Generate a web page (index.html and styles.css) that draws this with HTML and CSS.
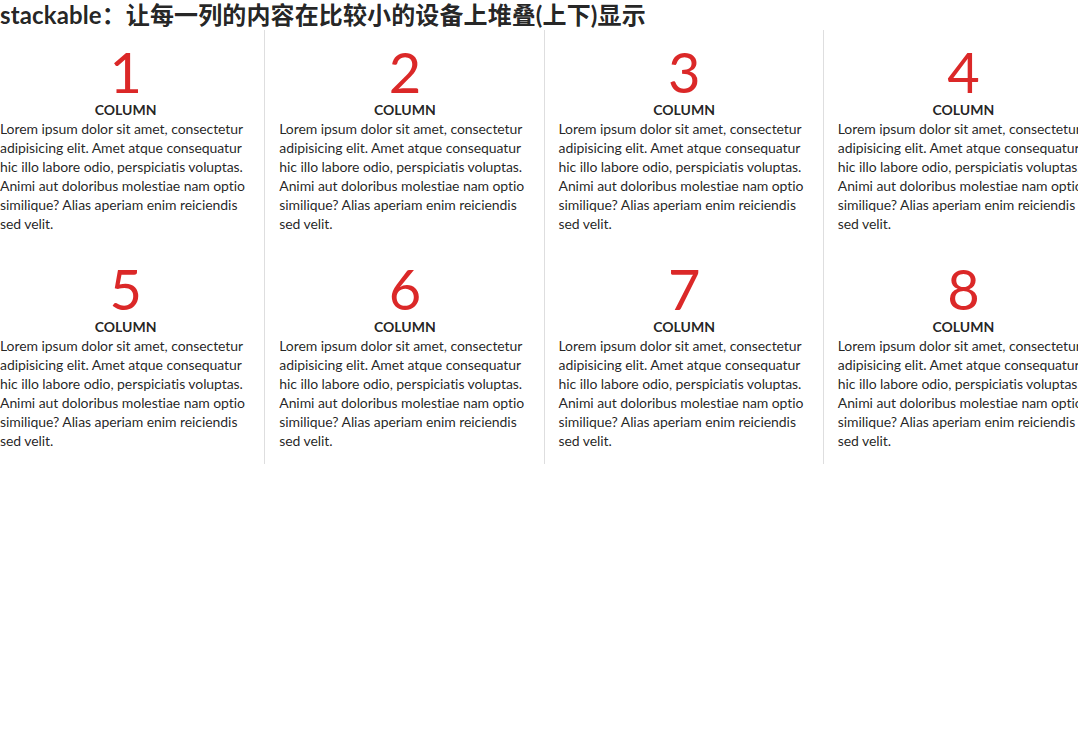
FILE: index.html
```html
<!DOCTYPE html>
<html lang="zh">
<head>
<meta charset="utf-8">
<title>stackable</title>
<link rel="stylesheet" href="styles.css">
</head>
<body>
<h2 class="title">stackable：让每一列的内容在比较小的设备上堆叠(上下)显示</h2>
<div class="grid">
  <div class="column"><div class="stat"><div class="value">1</div><div class="label">Column</div></div><p>Lorem ipsum dolor sit amet, consectetur adipisicing elit. Amet atque consequatur hic illo labore odio, perspiciatis voluptas. Animi aut doloribus molestiae nam optio similique? Alias aperiam enim reiciendis sed velit.</p></div>
  <div class="column"><div class="stat"><div class="value">2</div><div class="label">Column</div></div><p>Lorem ipsum dolor sit amet, consectetur adipisicing elit. Amet atque consequatur hic illo labore odio, perspiciatis voluptas. Animi aut doloribus molestiae nam optio similique? Alias aperiam enim reiciendis sed velit.</p></div>
  <div class="column"><div class="stat"><div class="value">3</div><div class="label">Column</div></div><p>Lorem ipsum dolor sit amet, consectetur adipisicing elit. Amet atque consequatur hic illo labore odio, perspiciatis voluptas. Animi aut doloribus molestiae nam optio similique? Alias aperiam enim reiciendis sed velit.</p></div>
  <div class="column"><div class="stat"><div class="value">4</div><div class="label">Column</div></div><p>Lorem ipsum dolor sit amet, consectetur adipisicing elit. Amet atque consequatur hic illo labore odio, perspiciatis voluptas. Animi aut doloribus molestiae nam optio similique? Alias aperiam enim reiciendis sed velit.</p></div>
  <div class="column"><div class="stat"><div class="value">5</div><div class="label">Column</div></div><p>Lorem ipsum dolor sit amet, consectetur adipisicing elit. Amet atque consequatur hic illo labore odio, perspiciatis voluptas. Animi aut doloribus molestiae nam optio similique? Alias aperiam enim reiciendis sed velit.</p></div>
  <div class="column"><div class="stat"><div class="value">6</div><div class="label">Column</div></div><p>Lorem ipsum dolor sit amet, consectetur adipisicing elit. Amet atque consequatur hic illo labore odio, perspiciatis voluptas. Animi aut doloribus molestiae nam optio similique? Alias aperiam enim reiciendis sed velit.</p></div>
  <div class="column"><div class="stat"><div class="value">7</div><div class="label">Column</div></div><p>Lorem ipsum dolor sit amet, consectetur adipisicing elit. Amet atque consequatur hic illo labore odio, perspiciatis voluptas. Animi aut doloribus molestiae nam optio similique? Alias aperiam enim reiciendis sed velit.</p></div>
  <div class="column"><div class="stat"><div class="value">8</div><div class="label">Column</div></div><p>Lorem ipsum dolor sit amet, consectetur adipisicing elit. Amet atque consequatur hic illo labore odio, perspiciatis voluptas. Animi aut doloribus molestiae nam optio similique? Alias aperiam enim reiciendis sed velit.</p></div>
</div>
</body>
</html>
```
FILE: styles.css
```css
html, body {
  margin: 0;
  padding: 0;
  background: #fff;
  overflow-x: hidden;
}
body {
  font-family: Lato, "Noto Sans CJK SC", sans-serif;
  font-size: 14px;
  line-height: 19px;
  color: rgba(0, 0, 0, 0.87);
  font-variant-ligatures: none;
  font-feature-settings: "liga" 0, "clig" 0;
}
.title {
  margin: 0;
  font-size: 24px;
  line-height: 30px;
  font-weight: 700;
  letter-spacing: 0.12px;
  font-family: Lato, "Noto Sans CJK SC", sans-serif;
}
.grid {
  display: grid;
  grid-template-columns: repeat(4, 279.25px);
  margin-left: -14px;
  width: 1117px;
}
.column {
  padding: 14px;
  box-shadow: -1px 0 0 0 rgba(34, 36, 38, 0.15);
}
.column:nth-child(4n+1) {
  box-shadow: none;
}
.stat {
  display: flex;
  flex-direction: column;
  align-items: center;
}
.value {
  font-size: 56px;
  line-height: 56px;
  font-weight: 400;
  color: #db2828;
}
.label {
  font-size: 14px;
  line-height: 19px;
  font-weight: 700;
  text-transform: uppercase;
}
p {
  margin: 0;
  letter-spacing: -0.07px;
}
```
